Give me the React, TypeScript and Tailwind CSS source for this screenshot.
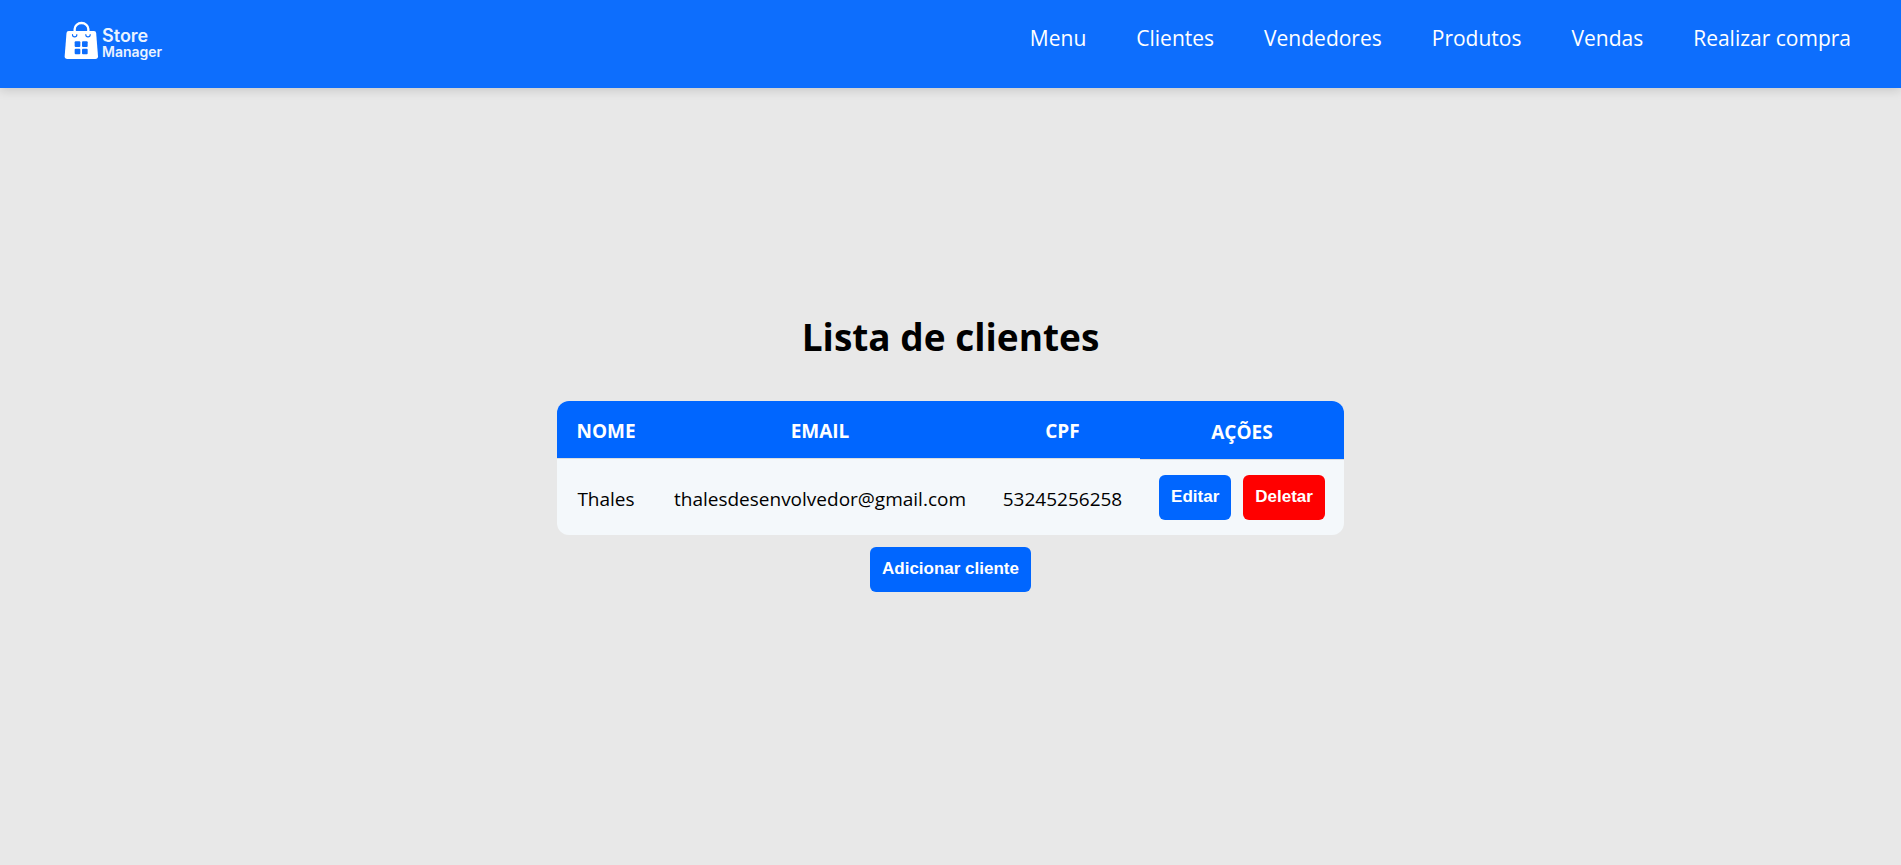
const links = ["Menu", "Clientes", "Vendedores", "Produtos", "Vendas", "Realizar compra"];

const clients = [{ name: "Thales", email: "thalesdesenvolvedor@gmail.com", cpf: "53245256258" }];

const buttonBase =
  "h-[45px] cursor-pointer rounded-md px-3 pb-px font-['Liberation_Sans',Arial,sans-serif] text-[17px] leading-5 font-bold text-white";

function Logo() {
  return (
    <a href="#" className="flex items-start gap-[2px] text-[#eaf3ff]">
      <svg viewBox="72 60 108 120" className="h-10 w-9" aria-hidden="true">
        <path
          d="M104 107V87a20.5 18 0 0 1 41 0v20"
          fill="none"
          stroke="#fff"
          strokeWidth="7"
        />
        <path
          d="M86 93h76q6 0 6.500 6l5.500 70q0 8-8 8H82q-8 0-8-8l5.500-70q.5-6 6.500-6z"
          fill="#fff"
        />
        <path
          d="M97.500 104a6.500 6.500 0 0 0 13 0M137.500 104a6.500 6.500 0 0 0 13 0"
          fill="none"
          stroke="#0d6efd"
          strokeWidth="3.500"
          strokeLinecap="round"
        />
        <g fill="#0d6efd">
          <rect x="104" y="124" width="17" height="17" rx="3" />
          <rect x="126" y="124" width="17" height="17" rx="3" />
          <rect x="104" y="146" width="17" height="17" rx="3" />
          <rect x="126" y="146" width="17" height="17" rx="3" />
        </g>
      </svg>
      <span className="flex flex-col pt-2 font-[Inter,sans-serif]">
        <span className="text-[18px] leading-4 font-semibold">Store</span>
        <span className="text-[14px] leading-4 font-semibold">Manager</span>
      </span>
    </a>
  );
}

export default function App() {
  return (
    <div className="flex min-h-screen flex-col bg-[#e8e8e8] font-['Open_Sans',sans-serif] text-black">
      <header className="flex h-[88px] items-start justify-between bg-[#0d6efd] pr-[50px] pl-16 shadow-[0_2px_10px_rgba(0,0,0,0.15)]">
        <div className="pt-5">
          <Logo />
        </div>
        <nav className="pt-[22px]">
          <ul className="flex gap-[50px] text-[21px] leading-8 text-white">
            {links.map((label) => (
              <li key={label}>
                <a href="#">{label}</a>
              </li>
            ))}
          </ul>
        </nav>
      </header>

      <main className="flex flex-1 flex-col items-center justify-center pb-[50px]">
        <h1 className="mb-[38px] text-[37px] leading-[52px] font-bold">Lista de clientes</h1>
        <div className="overflow-hidden rounded-xl bg-[#f4f8fb]">
          <table className="table-fixed border-collapse text-center">
            <colgroup>
              <col className="w-[98px]" />
              <col className="w-[330px]" />
              <col className="w-[155px]" />
              <col className="w-[204px]" />
            </colgroup>
            <thead className="text-[19px] leading-6 text-white">
              <tr>
                {["NOME", "EMAIL", "CPF"].map((title) => (
                  <th key={title} className="p-0 align-top font-bold">
                    <div className="flex h-[58px] items-center justify-center border-b border-[#dddddd] bg-[#0066ff] pt-[2px]">
                      {title}
                    </div>
                  </th>
                ))}
                <th className="p-0 align-top font-bold">
                  <div className="flex h-[59px] items-center justify-center border-b border-[#dddddd] bg-[#0066ff] pt-1">
                    AÇÕES
                  </div>
                </th>
              </tr>
            </thead>
            <tbody className="text-[19px] leading-7">
              {clients.map((client) => (
                <tr key={client.cpf}>
                  <td className="pt-[2px]">{client.name}</td>
                  <td className="pt-[2px]">{client.email}</td>
                  <td className="pt-[2px]">{client.cpf}</td>
                  <td className="py-[15px]">
                    <div className="flex justify-center gap-3">
                      <button type="button" className={`${buttonBase} bg-[#0066ff]`}>
                        Editar
                      </button>
                      <button type="button" className={`${buttonBase} bg-[#ff0000]`}>
                        Deletar
                      </button>
                    </div>
                  </td>
                </tr>
              ))}
            </tbody>
          </table>
        </div>
        <button type="button" className={`${buttonBase} mt-3 bg-[#0066ff]`}>
          Adicionar cliente
        </button>
      </main>
    </div>
  );
}
